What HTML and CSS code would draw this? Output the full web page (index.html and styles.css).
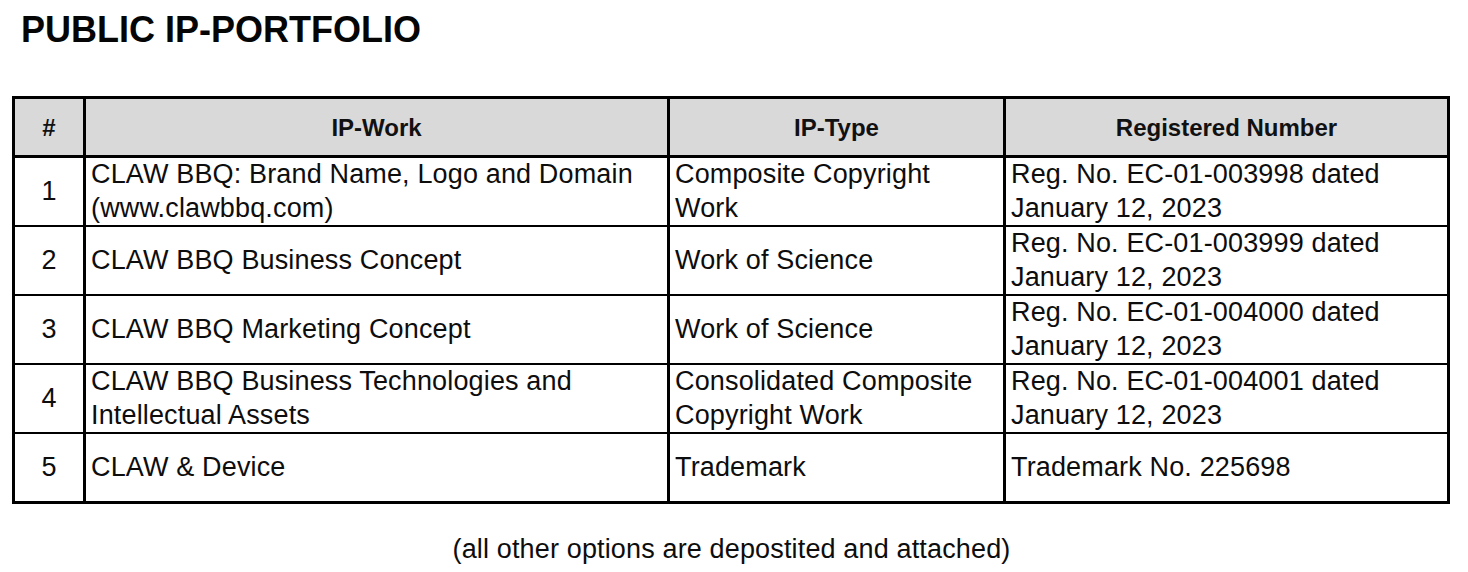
FILE: index.html
```html
<!DOCTYPE html>
<html>
<head>
<meta charset="utf-8">
<link rel="stylesheet" href="styles.css">
</head>
<body>
<div class="page">
  <h1 class="title">PUBLIC IP-PORTFOLIO</h1>
  <table class="portfolio">
    <colgroup>
      <col class="c-num">
      <col class="c-work">
      <col class="c-type">
      <col class="c-reg">
    </colgroup>
    <thead>
      <tr>
        <th>#</th>
        <th>IP-Work</th>
        <th>IP-Type</th>
        <th>Registered Number</th>
      </tr>
    </thead>
    <tbody>
      <tr>
        <td class="num">1</td>
        <td>CLAW BBQ: Brand Name, Logo and Domain (www.clawbbq.com)</td>
        <td>Composite Copyright Work</td>
        <td>Reg. No. EC-01-003998 dated January 12, 2023</td>
      </tr>
      <tr>
        <td class="num">2</td>
        <td>CLAW BBQ Business Concept</td>
        <td>Work of Science</td>
        <td>Reg. No. EC-01-003999 dated January 12, 2023</td>
      </tr>
      <tr>
        <td class="num">3</td>
        <td>CLAW BBQ Marketing Concept</td>
        <td>Work of Science</td>
        <td>Reg. No. EC-01-004000 dated January 12, 2023</td>
      </tr>
      <tr>
        <td class="num">4</td>
        <td>CLAW BBQ Business Technologies and Intellectual Assets</td>
        <td>Consolidated Composite Copyright Work</td>
        <td>Reg. No. EC-01-004001 dated January 12, 2023</td>
      </tr>
      <tr>
        <td class="num">5</td>
        <td>CLAW &amp; Device</td>
        <td>Trademark</td>
        <td>Trademark No. 225698</td>
      </tr>
    </tbody>
  </table>
  <p class="note">(all other options are depostited and attached)</p>
</div>
</body>
</html>
```

FILE: styles.css
```css
html, body {
  margin: 0;
  padding: 0;
  background: #ffffff;
}

.page {
  font-family: "Liberation Sans", Arial, sans-serif;
  color: #0d0d0d;
  padding: 12px 0 0 12px;
  width: 1435px;
}

.title {
  margin: 0 0 0 9px;
  font-size: 36px;
  line-height: 36px;
  font-weight: bold;
  color: #050505;
}

.portfolio {
  margin-top: 48px;
  width: 1435px;
  table-layout: fixed;
  border-collapse: collapse;
  border: 3px solid #000;
}

.c-num { width: 71px; }
.c-work { width: 584px; }
.c-type { width: 336px; }
.c-reg { width: 444px; }

.portfolio th {
  background: #d9d9d9;
  font-size: 24px;
  font-weight: bold;
  height: 54px;
  padding: 2px 4px 0 4px;
  text-align: center;
  vertical-align: middle;
  border-left: 3px solid #000;
  border-right: 3px solid #000;
  border-bottom: 3px solid #000;
  color: #111;
}

.portfolio td {
  font-size: 27px;
  line-height: 33.5px;
  letter-spacing: 0.15px;
  height: 67px;
  padding: 0 12px 0 5px;
  vertical-align: middle;
  text-align: left;
  border-left: 3px solid #000;
  border-right: 3px solid #000;
  border-top: 2px solid #000;
  border-bottom: 2px solid #000;
}

.portfolio td.num {
  text-align: center;
  padding: 0;
}

.note {
  margin: 29px 0 0 0;
  text-align: center;
  font-size: 27px;
  line-height: 32px;
  letter-spacing: 0.15px;
  padding-left: 4px;
}
```
